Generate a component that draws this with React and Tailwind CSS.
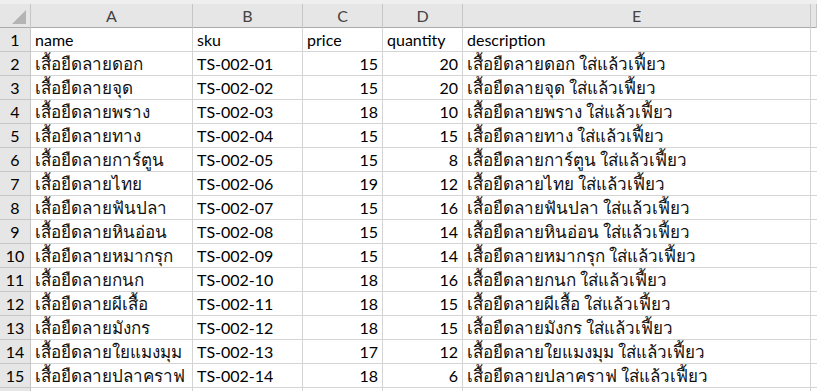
import React from 'react';

const rows = [
    ['เสื้อยืดลายดอก', 'TS-002-01', 15, 20],
    ['เสื้อยืดลายจุด', 'TS-002-02', 15, 20],
    ['เสื้อยืดลายพราง', 'TS-002-03', 18, 10],
    ['เสื้อยืดลายทาง', 'TS-002-04', 15, 15],
    ['เสื้อยืดลายการ์ตูน', 'TS-002-05', 15, 8],
    ['เสื้อยืดลายไทย', 'TS-002-06', 19, 12],
    ['เสื้อยืดลายฟันปลา', 'TS-002-07', 15, 16],
    ['เสื้อยืดลายหินอ่อน', 'TS-002-08', 15, 14],
    ['เสื้อยืดลายหมากรุก', 'TS-002-09', 15, 14],
    ['เสื้อยืดลายกนก', 'TS-002-10', 18, 16],
    ['เสื้อยืดลายผีเสื้อ', 'TS-002-11', 18, 15],
    ['เสื้อยืดลายมังกร', 'TS-002-12', 18, 15],
    ['เสื้อยืดลายใยแมงมุม', 'TS-002-13', 17, 12],
    ['เสื้อยืดลายปลาคราฟ', 'TS-002-14', 18, 6],
];

const cols = 'grid grid-cols-[31px_162px_110px_80px_80px_348px_1fr]';
const cell = 'h-[24px] border-r border-b border-[#d4d4d4] px-[4px] flex items-center whitespace-nowrap overflow-hidden';
const thai = 'text-[17px] text-[#111]';

const App = () => {
    return (
        <div className="w-[817px] h-[391px] overflow-hidden bg-white text-[16px] text-black font-['Lato','Noto_Sans',sans-serif]">
            {/* Column letters */}
            <div className="h-[4px] bg-[#efefef]" />
            <div className={`${cols} h-[24px] bg-[#e6e6e6] border-b border-[#ababab] text-[#444]`}>
                <div className="relative border-r border-[#c6c6c6]">
                    <svg className="absolute left-[12px] top-[6px]" width="14" height="14" viewBox="0 0 14 14">
                        <polygon points="14,0 14,14 0,14" fill="#b4b4b4" />
                    </svg>
                </div>
                {['A', 'B', 'C', 'D', 'E', ''].map((c, i) => (
                    <div key={i} className="flex items-center justify-center border-r border-[#c6c6c6]">{c}</div>
                ))}
            </div>

            {/* Header row */}
            <div className={cols}>
                <div className="h-[24px] bg-[#e6e6e6] border-r border-b border-[#c6c6c6] flex items-center justify-center">1</div>
                <div className={cell}>name</div>
                <div className={cell}>sku</div>
                <div className={cell}>price</div>
                <div className={cell}>quantity</div>
                <div className={cell}>description</div>
                <div className={cell}></div>
            </div>

            {rows.map((r, i) => (
                <div key={r[1]} className={cols}>
                    <div className="h-[24px] bg-[#e6e6e6] border-r border-b border-[#c6c6c6] flex items-center justify-center">{i + 2}</div>
                    <div className={cell}><span className={thai}>{r[0]}</span></div>
                    <div className={cell}>{r[1]}</div>
                    <div className={`${cell} justify-end`}>{r[2]}</div>
                    <div className={`${cell} justify-end`}>{r[3]}</div>
                    <div className={cell}><span className={thai}>{r[0]} ใส่แล้วเฟี้ยว</span></div>
                    <div className={cell}></div>
                </div>
            ))}

            <div className={cols}>
                <div className="h-[24px] bg-[#e6e6e6] border-r border-[#c6c6c6]" />
                <div className="border-r border-[#d4d4d4]" />
                <div className="border-r border-[#d4d4d4]" />
                <div className="border-r border-[#d4d4d4]" />
                <div className="border-r border-[#d4d4d4]" />
                <div className="border-r border-[#d4d4d4]" />
                <div />
            </div>
        </div>
    );
};

export default App;
